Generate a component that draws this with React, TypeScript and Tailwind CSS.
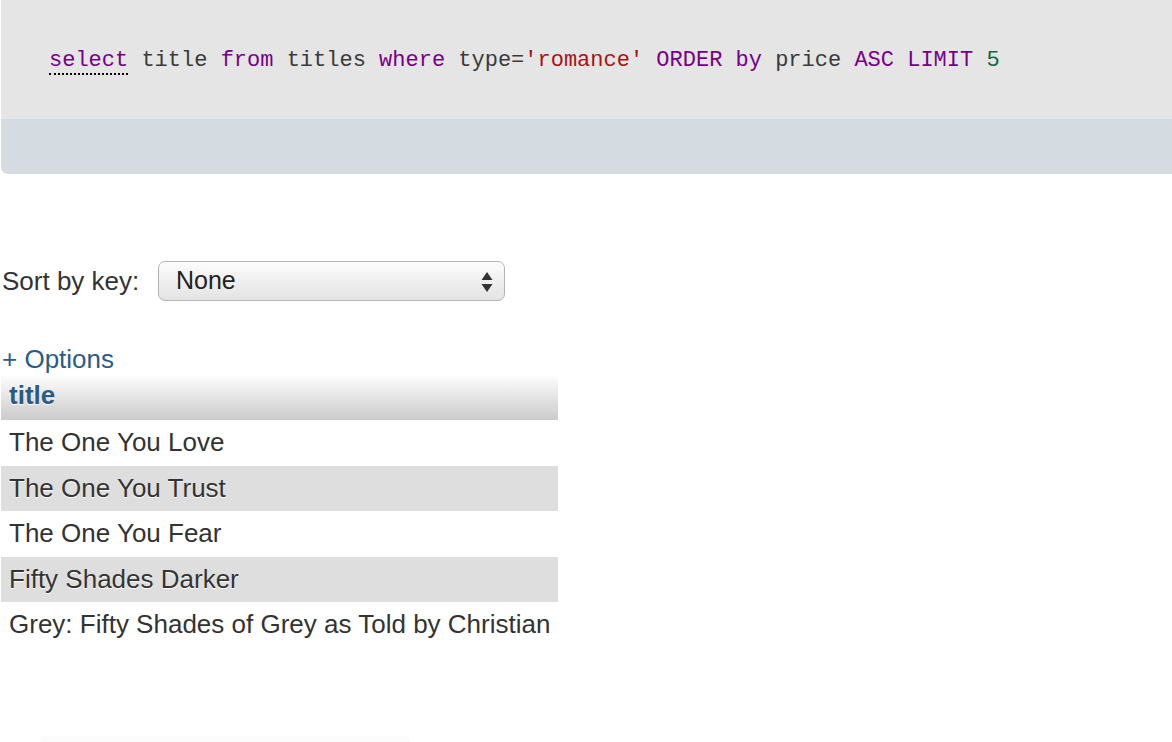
import React from "react";

const rows = [
  "The One You Love",
  "The One You Trust",
  "The One You Fear",
  "Fifty Shades Darker",
  "Grey: Fifty Shades of Grey as Told by Christian",
];

function QueryBox() {
  return (
    <div className="ml-[1px] w-full overflow-hidden rounded-bl-[7px]">
      <div className="h-[119px] bg-[#e5e5e5] pt-[48px] pl-[48px]">
        <pre className="m-0 text-[22px] leading-[26px] text-[#3a3a3a]" style={{fontFamily: '"Liberation Mono", "Courier New", monospace'}}>
          <span className="border-b-2 border-dotted border-black text-[#770088]">select</span>{" title "}
          <span className="text-[#770088]">from</span>{" titles "}
          <span className="text-[#770088]">where</span>{" type="}
          <span className="text-[#aa1111]">'romance'</span>{" "}
          <span className="text-[#770088]">ORDER</span>{" "}
          <span className="text-[#770088]">by</span>{" price "}
          <span className="text-[#770088]">ASC</span>{" "}
          <span className="text-[#770088]">LIMIT</span>{" "}
          <span className="text-[#116644]">5</span>
        </pre>
      </div>
      <div className="h-[55px] bg-[#d4dbe1]" />
    </div>
  );
}

function SortSelect() {
  return (
    <div className="flex h-[40px] items-center">
      <label className="ml-[2px] w-[156px] text-[#333]">Sort by key:</label>
      <div className="relative flex h-[40px] w-[347px] items-center rounded-[7px] border border-[#b4b4b4] bg-gradient-to-b from-[#fdfdfd] via-[#efefef] to-[#e4e4e4] pl-[17px] text-[25px] text-[#222] shadow-[inset_0_1px_0_#fff]">
        None
        <svg className="absolute right-[11px] top-[9px]" width="12" height="22" viewBox="0 0 12 22">
          <path d="M6 1 L11.5 9 L0.5 9 Z" fill="#333" />
          <path d="M0.5 13 L11.5 13 L6 21 Z" fill="#333" />
        </svg>
      </div>
    </div>
  );
}

export default function App() {
  return (
    <div className="min-h-[742px] bg-white text-[26px]" style={{fontFamily: '"Liberation Sans", Arial, sans-serif'}}>
      <QueryBox />
      <div className="mt-[87px]">
        <SortSelect />
      </div>
      <div className="mt-[43px] ml-[2px] leading-[30px] text-[#2a5c86]">+ Options</div>
      <div className="mt-[1px] ml-[1px] w-[557px]">
        <div className="h-[45px] bg-gradient-to-b from-[#fefefe] to-[#cbcbcb] pl-[8px] font-bold leading-[40px] text-[#2b5a82] [text-shadow:0_1px_0_#fff]">
          title
        </div>
        {rows.map((r, i) => (
          <div
            key={r}
            className={`h-[45.5px] pl-[8px] leading-[45.5px] whitespace-nowrap text-[#333] [text-shadow:0_1px_0_#fff] ${i % 2 === 1 ? "bg-[#dedede]" : "bg-white"}`}
          >
            {r}
          </div>
        ))}
      </div>
      <div className="mt-[86px] ml-[40px] h-[8px] w-[370px] rounded-t-full bg-gradient-to-b from-white to-[#f8f8f8]" />
    </div>
  );
}
